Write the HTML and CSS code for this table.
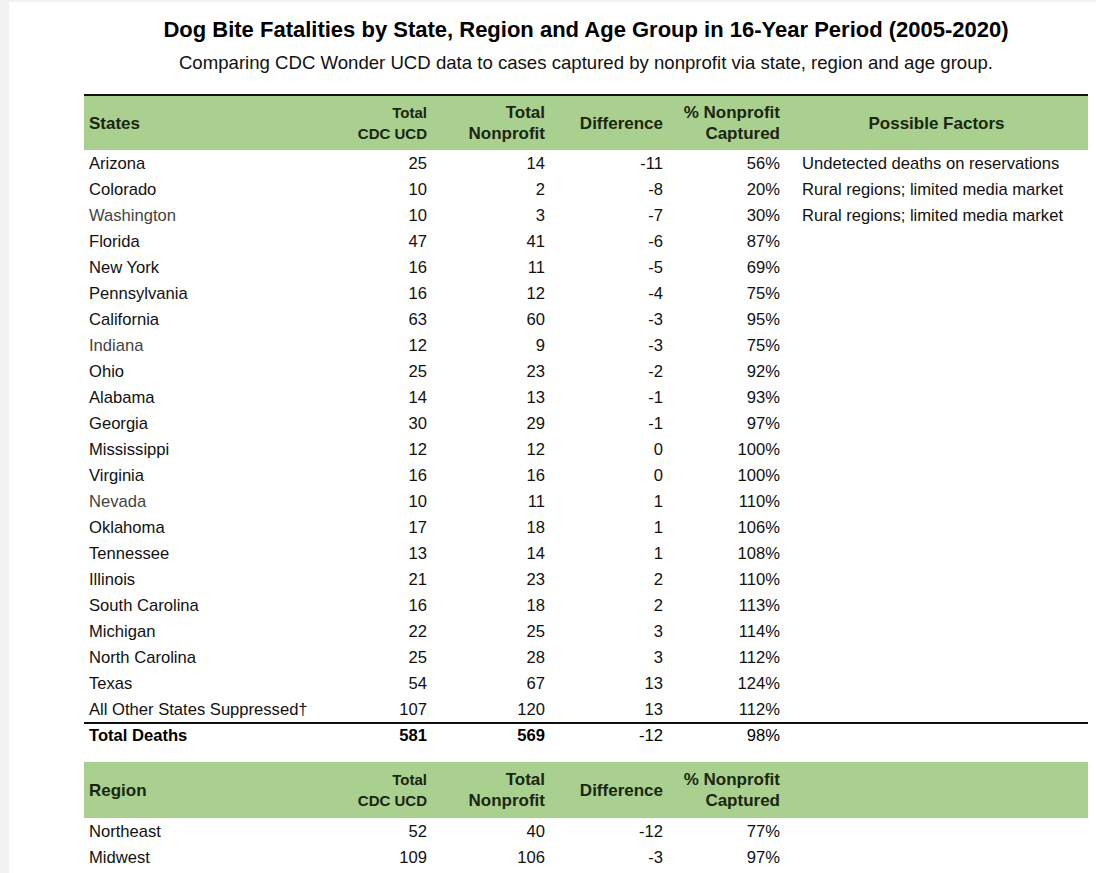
FILE: index.html
```html
<!DOCTYPE html>
<html>
<head>
<meta charset="utf-8">
<link rel="stylesheet" href="styles.css">
</head>
<body>
<div class="page">
  <h1 class="title">Dog Bite Fatalities by State, Region and Age Group in 16-Year Period (2005-2020)</h1>
  <p class="subtitle">Comparing CDC Wonder UCD data to cases captured by nonprofit via state, region and age group.</p>

  <div class="table states-table">
    <div class="row head">
      <div class="c name">States</div>
      <div class="c num"><span class="sm">Total<br>CDC UCD</span></div>
      <div class="c num">Total<br>Nonprofit</div>
      <div class="c num">Difference</div>
      <div class="c num">% Nonprofit<br>Captured</div>
      <div class="c factor-head">Possible Factors</div>
    </div>
    <div class="row"><div class="c name">Arizona</div><div class="c num">25</div><div class="c num">14</div><div class="c num">-11</div><div class="c num">56%</div><div class="c factor">Undetected deaths on reservations</div></div>
    <div class="row"><div class="c name">Colorado</div><div class="c num">10</div><div class="c num">2</div><div class="c num">-8</div><div class="c num">20%</div><div class="c factor">Rural regions; limited media market</div></div>
    <div class="row"><div class="c name muted">Washington</div><div class="c num">10</div><div class="c num">3</div><div class="c num">-7</div><div class="c num">30%</div><div class="c factor">Rural regions; limited media market</div></div>
    <div class="row"><div class="c name">Florida</div><div class="c num">47</div><div class="c num">41</div><div class="c num">-6</div><div class="c num">87%</div><div class="c factor"></div></div>
    <div class="row"><div class="c name">New York</div><div class="c num">16</div><div class="c num">11</div><div class="c num">-5</div><div class="c num">69%</div><div class="c factor"></div></div>
    <div class="row"><div class="c name">Pennsylvania</div><div class="c num">16</div><div class="c num">12</div><div class="c num">-4</div><div class="c num">75%</div><div class="c factor"></div></div>
    <div class="row"><div class="c name">California</div><div class="c num">63</div><div class="c num">60</div><div class="c num">-3</div><div class="c num">95%</div><div class="c factor"></div></div>
    <div class="row"><div class="c name muted">Indiana</div><div class="c num">12</div><div class="c num">9</div><div class="c num">-3</div><div class="c num">75%</div><div class="c factor"></div></div>
    <div class="row"><div class="c name">Ohio</div><div class="c num">25</div><div class="c num">23</div><div class="c num">-2</div><div class="c num">92%</div><div class="c factor"></div></div>
    <div class="row"><div class="c name">Alabama</div><div class="c num">14</div><div class="c num">13</div><div class="c num">-1</div><div class="c num">93%</div><div class="c factor"></div></div>
    <div class="row"><div class="c name">Georgia</div><div class="c num">30</div><div class="c num">29</div><div class="c num">-1</div><div class="c num">97%</div><div class="c factor"></div></div>
    <div class="row"><div class="c name">Mississippi</div><div class="c num">12</div><div class="c num">12</div><div class="c num">0</div><div class="c num">100%</div><div class="c factor"></div></div>
    <div class="row"><div class="c name">Virginia</div><div class="c num">16</div><div class="c num">16</div><div class="c num">0</div><div class="c num">100%</div><div class="c factor"></div></div>
    <div class="row"><div class="c name muted">Nevada</div><div class="c num">10</div><div class="c num">11</div><div class="c num">1</div><div class="c num">110%</div><div class="c factor"></div></div>
    <div class="row"><div class="c name">Oklahoma</div><div class="c num">17</div><div class="c num">18</div><div class="c num">1</div><div class="c num">106%</div><div class="c factor"></div></div>
    <div class="row"><div class="c name">Tennessee</div><div class="c num">13</div><div class="c num">14</div><div class="c num">1</div><div class="c num">108%</div><div class="c factor"></div></div>
    <div class="row"><div class="c name">Illinois</div><div class="c num">21</div><div class="c num">23</div><div class="c num">2</div><div class="c num">110%</div><div class="c factor"></div></div>
    <div class="row"><div class="c name">South Carolina</div><div class="c num">16</div><div class="c num">18</div><div class="c num">2</div><div class="c num">113%</div><div class="c factor"></div></div>
    <div class="row"><div class="c name">Michigan</div><div class="c num">22</div><div class="c num">25</div><div class="c num">3</div><div class="c num">114%</div><div class="c factor"></div></div>
    <div class="row"><div class="c name">North Carolina</div><div class="c num">25</div><div class="c num">28</div><div class="c num">3</div><div class="c num">112%</div><div class="c factor"></div></div>
    <div class="row"><div class="c name">Texas</div><div class="c num">54</div><div class="c num">67</div><div class="c num">13</div><div class="c num">124%</div><div class="c factor"></div></div>
    <div class="row"><div class="c name">All Other States Suppressed†</div><div class="c num">107</div><div class="c num">120</div><div class="c num">13</div><div class="c num">112%</div><div class="c factor"></div></div>
    <div class="row total"><div class="c name">Total Deaths</div><div class="c num">581</div><div class="c num">569</div><div class="c num normal">-12</div><div class="c num normal">98%</div><div class="c factor"></div></div>
  </div>

  <div class="table region-table">
    <div class="row head tall">
      <div class="c name">Region</div>
      <div class="c num"><span class="sm">Total<br>CDC UCD</span></div>
      <div class="c num">Total<br>Nonprofit</div>
      <div class="c num">Difference</div>
      <div class="c num">% Nonprofit<br>Captured</div>
      <div class="c factor-head"></div>
    </div>
    <div class="row"><div class="c name">Northeast</div><div class="c num">52</div><div class="c num">40</div><div class="c num">-12</div><div class="c num">77%</div><div class="c factor"></div></div>
    <div class="row"><div class="c name">Midwest</div><div class="c num">109</div><div class="c num">106</div><div class="c num">-3</div><div class="c num">97%</div><div class="c factor"></div></div>
  </div>
</div>
</body>
</html>
```

FILE: styles.css
```css
html, body {
  margin: 0;
  padding: 0;
}
body {
  background: #f2f2f2;
  font-family: "Liberation Sans", Arial, Helvetica, sans-serif;
  color: #111;
}
.page {
  margin: 2px 0 0 9px;
  background: #fff;
  min-height: 871px;
  padding: 15px 8px 0 75px;
  box-sizing: border-box;
  width: 1087px;
}
.title {
  margin: 0;
  font-size: 22px;
  font-weight: bold;
  text-align: center;
  line-height: 26px;
  color: #000;
}
.subtitle {
  margin: 9px 0 0;
  font-size: 18.6px;
  text-align: center;
  line-height: 22px;
  color: #111;
}
.table {
  width: 1004px;
}
.states-table {
  margin-top: 20px;
  border-top: 2px solid #111;
}
.region-table {
  margin-top: 14px;
}
.row {
  display: grid;
  grid-template-columns: 226px 122px 118px 118px 117px 303px;
  height: 26px;
  padding-top: 2px;
  align-items: center;
  font-size: 16.6px;
  box-sizing: border-box;
}
.row.head {
  height: 54px;
  padding-top: 0;
  background: #a9d08e;
  font-weight: bold;
  color: #1a2612;
  font-size: 17px;
  line-height: 21px;
}
.row.head.tall {
  height: 56px;
}
.row.head .sm {
  font-size: 15px;
  line-height: 21px;
}
.c.name {
  padding-left: 5px;
}
.c.num {
  text-align: right;
  padding-right: 5px;
}
.c.factor {
  padding-left: 17px;
}
.c.factor-head {
  text-align: center;
}
.muted {
  color: #444;
}
.row.total {
  border-top: 2px solid #111;
  padding-top: 0;
  font-weight: bold;
  color: #000;
}
.row.total .normal {
  font-weight: normal;
}
```
